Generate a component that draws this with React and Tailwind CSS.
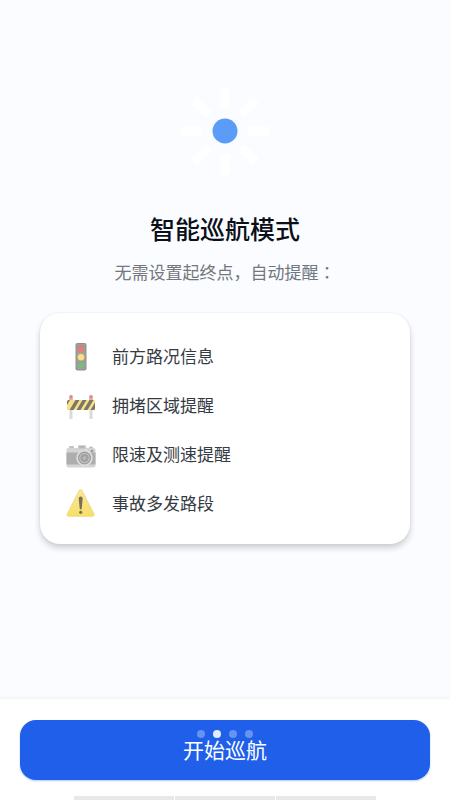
import clsx from "clsx";

const features = [
  { label: "前方路况信息", Icon: TrafficLightIcon },
  { label: "拥堵区域提醒", Icon: BarrierIcon },
  { label: "限速及测速提醒", Icon: CameraIcon },
  { label: "事故多发路段", Icon: WarningIcon },
];

const rayAngles = [0, 45, 90, 135, 180, 225, 270, 315];

function SunIcon() {
  return (
    <svg viewBox="0 0 96 96" className="h-24 w-24" aria-hidden="true">
      {rayAngles.map((angle) => (
        <rect
          key={angle}
          x="43.5"
          y="4"
          width="9"
          height="21"
          rx="2"
          fill="#ffffff"
          transform={`rotate(${angle} 48 48)`}
        />
      ))}
      <circle cx="48" cy="48" r="12.5" fill="#5a9cf8" />
    </svg>
  );
}

function TrafficLightIcon() {
  return (
    <svg viewBox="0 0 30 30" className="h-[30px] w-[30px]" aria-hidden="true">
      <rect x="9.5" y="2" width="11" height="27.5" rx="2" fill="#8f8f8f" />
      <rect x="10.5" y="3" width="9" height="25.5" rx="1.5" fill="#a09f9d" />
      <circle cx="15" cy="7.800" r="3.400" fill="#df7f80" />
      <circle cx="15" cy="16" r="3.400" fill="#fadf7c" />
      <circle cx="15" cy="24.200" r="3.400" fill="#7fb887" />
      <path
        d="M11.800 6.600a3.400 3.400 0 0 1 6.400 0M11.800 14.800a3.400 3.400 0 0 1 6.400 0M11.800 23a3.400 3.400 0 0 1 6.400 0"
        fill="none"
        stroke="#8a8886"
        strokeWidth="0.4"
      />
    </svg>
  );
}

function BarrierIcon() {
  return (
    <svg viewBox="0 -3 30 30" className="h-[30px] w-[30px]" aria-hidden="true">
      <defs>
        <clipPath id="barrier-board">
          <rect x="1" y="7" width="28" height="10" rx="1" />
        </clipPath>
      </defs>
      <rect x="3.500" y="6" width="3" height="20" fill="#dadada" />
      <rect x="23.500" y="6" width="3" height="20" fill="#dadada" />
      <g clipPath="url(#barrier-board)">
        <rect x="1" y="7" width="28" height="10" fill="#f7e08c" />
        <path
          d="M1 12V8.500L2 7h2zM3.500 17l6-10h4l-6 10zM10.500 17l6-10h4l-6 10zM17.500 17l6-10h4l-6 10zM24.500 17L29 9.500V16l-0.500 1z"
          fill="#7d7765"
        />
      </g>
      <rect x="3" y="5.500" width="4" height="1.500" fill="#e7b79b" />
      <rect x="23" y="5.500" width="4" height="1.500" fill="#e7b79b" />
      <circle cx="5" cy="4" r="1.900" fill="#dc8b86" />
      <circle cx="25" cy="4" r="1.900" fill="#dc8b86" />
    </svg>
  );
}

function CameraIcon() {
  return (
    <svg viewBox="0 -3 30 30" className="h-[30px] w-[30px]" aria-hidden="true">
      <rect x="3" y="4" width="5" height="3" rx="1" fill="#c3c3c3" />
      <rect x="23" y="4.500" width="4" height="2.500" rx="1" fill="#c3c3c3" />
      <path d="M11 7l1.500-4h7L21 7z" fill="#d3d3d3" />
      <rect x="0.500" y="6" width="29" height="19.500" rx="2" fill="#d4d4d4" />
      <path d="M0.500 10.500h29V22.500h-29z" fill="#aeaeae" />
      <rect x="13" y="4" width="6" height="2.500" rx="0.500" fill="#b8b8b8" />
      <circle cx="26" cy="9" r="1.300" fill="#989898" />
      <circle cx="18.500" cy="16" r="8.200" fill="#dedede" />
      <circle cx="18.500" cy="16" r="6.500" fill="#9a9a9a" />
      <circle cx="18.500" cy="16" r="5.300" fill="#c4c4c4" />
      <circle cx="18.500" cy="16" r="4.200" fill="#a2a2a2" />
      <circle cx="18.500" cy="16" r="1.800" fill="#b9b9b9" />
    </svg>
  );
}

function WarningIcon() {
  return (
    <svg viewBox="0 0 30 30" className="h-[30px] w-[30px]" aria-hidden="true">
      <defs>
        <linearGradient id="warning-fill" x1="0" y1="0" x2="0" y2="1">
          <stop offset="0" stopColor="#f9e69b" />
          <stop offset="1" stopColor="#f8df69" />
        </linearGradient>
      </defs>
      <path
        d="M13.200 2.300a1.600 1.600 0 0 1 2.800 0L28 26a1.500 1.500 0 0 1-1.300 2.300H2.500A1.500 1.500 0 0 1 1.200 26z"
        fill="url(#warning-fill)"
        stroke="#efd576"
        strokeWidth="0.8"
      />
      <path d="M12.700 10.500a2 2 0 0 1 4 0l-1 10a1 1 0 0 1-2 0z" fill="#777153" />
      <circle cx="14.700" cy="24.300" r="1.600" fill="#777153" />
    </svg>
  );
}

function PageDots({ count, active }) {
  return (
    <span className="absolute inset-x-0 top-[10px] flex justify-center gap-2" aria-hidden="true">
      {Array.from({ length: count }, (_, i) => (
        <span
          key={i}
          className={clsx("h-2 w-2 rounded-full", i === active ? "bg-[#e4edff]" : "bg-[#6792f2]")}
        />
      ))}
    </span>
  );
}

export default function App() {
  return (
    <div className="flex min-h-screen flex-col bg-[#fafcff] font-['Noto_Sans_CJK_SC',sans-serif]">
      <main className="flex flex-1 flex-col items-center px-10 pt-[83px]">
        <SunIcon />

        <h1 className="mt-[31px] text-[25px] leading-9 font-medium text-[#0b0f18]">智能巡航模式</h1>
        <p className="mt-3 text-[17px] leading-7 text-[#73777e]">
          无需设置起终点，自动提醒
          <span className="font-['Noto_Sans_CJK_TC',sans-serif]" lang="zh-TW">：</span>
        </p>

        <ul className="mt-[27px] flex w-full flex-col gap-[19px] rounded-[20px] bg-white px-[26px] pt-7 pb-[26px] shadow-[0_4px_6px_rgba(0,0,0,0.18),0_0_2px_rgba(0,0,0,0.08)]">
          {features.map(({ label, Icon }) => (
            <li key={label} className="flex items-center gap-4">
              <Icon />
              <span className="text-[17px] leading-[30px] text-[#353b43]">{label}</span>
            </li>
          ))}
        </ul>
      </main>

      <footer className="bg-white px-5 pt-[21px] shadow-[0_-1px_3px_rgba(0,0,0,0.05)]">
        <button
          type="button"
          className="relative flex h-[60px] w-full items-center justify-center rounded-[16px] bg-[#205fe9] text-[21px] text-white shadow-[0_1px_2px_rgba(32,95,233,0.35)]"
        >
          <PageDots count={4} active={1} />
          开始巡航
        </button>
        <div className="mx-auto mt-4 flex h-1 w-[302px] gap-px" aria-hidden="true">
          <span className="flex-1 bg-[#e8e8e8]" />
          <span className="flex-1 bg-[#e8e8e8]" />
          <span className="flex-1 bg-[#e8e8e8]" />
        </div>
      </footer>
    </div>
  );
}
